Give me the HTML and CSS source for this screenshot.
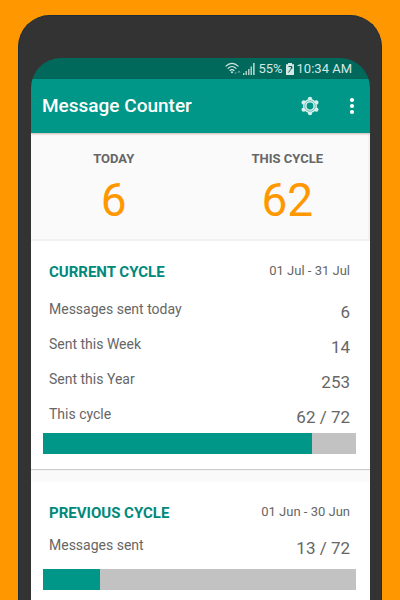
FILE: index.html
```html
<!DOCTYPE html>
<html lang="en">
<head>
<meta charset="utf-8">
<meta name="viewport" content="width=device-width, initial-scale=1">
<title>Message Counter</title>
<link rel="stylesheet" href="styles.css">
</head>
<body>
<div class="phone">
  <div class="screen">
    <div class="status">
      <svg class="wifi" width="16" height="14" viewBox="0 0 16 14" fill="none" stroke="currentColor" stroke-width="1.2" aria-hidden="true">
        <path d="M.6 4.400Q7 -1.600 13.400 4.400M2.700 6.700Q7 2.300 11.300 6.700M4.700 8.800Q7 6.600 9.300 8.800"/>
        <path d="M5.600 10L7 11.600 8.400 10 7 9.200z" fill="currentColor" stroke="none"/>
        <path d="M9.300 10.500h2.400L10.500 12.200zM12.300 10.500h3.400L14 8.500z" fill="currentColor" stroke="none" opacity=".5"/>
      </svg>
      <svg class="signal" width="12" height="12" viewBox="0 0 12 12" fill="currentColor" aria-hidden="true">
        <path d="M0 10h1.500v2H0zM2.500 8H4v4H2.500zM5 6h1.500v6H5zM7.500 3.500H9V12H7.500zM10 0h1.700v12H10z" opacity=".8"/>
      </svg>
      <span>55%</span>
      <svg class="battery" width="8" height="12" viewBox="0 0 8 12" aria-hidden="true">
        <path d="M2 0h4v1.200H8V12H0V1.200h2z" fill="currentColor"/>
        <path d="M2.500 3.500h3.300L4.800 6.300 2.500 9.500M5.800 3.500V6" fill="none" stroke="#00695c" stroke-width="1"/>
      </svg>
      <span>10:34 AM</span>
    </div>
    <header class="appbar">
      <h1>Message Counter</h1>
      <button class="icon-button" type="button" aria-label="Settings">
        <svg width="18" height="20" viewBox="-9 -10 18 20" aria-hidden="true">
          <g fill="#d8f0ed">
            <circle r="7"/>
            <circle cy="-7" r="2.200"/><circle cy="7" r="2.200"/>
            <circle cx="6.300" cy="-3.600" r="2.200"/><circle cx="6.300" cy="3.600" r="2.200"/>
            <circle cx="-6.300" cy="-3.600" r="2.200"/><circle cx="-6.300" cy="3.600" r="2.200"/>
          </g>
          <circle r="5.300" fill="none" stroke="#6fc3ba" stroke-width="1"/>
          <circle r="3.400" fill="#009688"/>
        </svg>
      </button>
      <button class="icon-button" type="button" aria-label="More options">
        <svg width="6" height="18" viewBox="0 0 6 18" fill="#fff" aria-hidden="true">
          <circle cx="3" cy="3" r="2.100"/><circle cx="3" cy="9" r="2.100"/><circle cx="3" cy="15" r="2.100"/>
        </svg>
      </button>
    </header>
    <main>
      <section class="summary">
        <div class="stat"><h2>TODAY</h2><p>6</p></div>
        <div class="stat"><h2>THIS CYCLE</h2><p>62</p></div>
      </section>
      <section class="card">
        <div class="card-head"><h2>CURRENT CYCLE</h2><span>01 Jul - 31 Jul</span></div>
        <dl class="rows">
          <div class="row"><dt>Messages sent today</dt><dd>6</dd></div>
          <div class="row"><dt>Sent this Week</dt><dd>14</dd></div>
          <div class="row"><dt>Sent this Year</dt><dd>253</dd></div>
          <div class="row"><dt>This cycle</dt><dd>62 / 72</dd></div>
        </dl>
        <div class="bar" role="progressbar" aria-label="This cycle" aria-valuemin="0" aria-valuemax="72" aria-valuenow="62"><div class="fill" style="width:86.1%"></div></div>
      </section>
      <section class="card card-compact">
        <div class="card-head"><h2>PREVIOUS CYCLE</h2><span>01 Jun - 30 Jun</span></div>
        <dl class="rows">
          <div class="row"><dt>Messages sent</dt><dd>13 / 72</dd></div>
        </dl>
        <div class="bar" role="progressbar" aria-label="Previous cycle" aria-valuemin="0" aria-valuemax="72" aria-valuenow="13"><div class="fill" style="width:18.1%"></div></div>
      </section>
    </main>
  </div>
</div>
</body>
</html>
```
FILE: styles.css
```css
* {
  box-sizing: border-box;
}

body,
h1,
h2,
p,
dl,
dd {
  margin: 0;
}

body {
  display: flex;
  min-height: 100vh;
  padding: 15px 18px 0;
  background: #ff9800;
  color: #666;
  font-family: Roboto, "Liberation Sans", sans-serif;
}

.phone {
  display: flex;
  flex: 1;
  padding: 42px 11px 0 12px;
  border: solid #1d2c3c;
  border-width: 1px 1px 0;
  border-radius: 32px 32px 0 0;
  background: #333;
}

.screen {
  display: flex;
  flex: 1;
  flex-direction: column;
  overflow: hidden;
  border-radius: 30px 30px 0 0;
}

main {
  flex: 1;
  background: #fafafa;
}

.status {
  display: flex;
  align-items: center;
  justify-content: flex-end;
  height: 21px;
  padding-right: 18px;
  background: #00695c;
  color: #d5e8e5;
  font-size: 13px;
  line-height: 21px;
}

.wifi {
  margin-right: 2px;
}

.signal,
.battery {
  margin-right: 3px;
}

.battery {
  margin-left: 3px;
}

.appbar {
  position: relative;
  display: flex;
  align-items: center;
  height: 54px;
  padding: 0 7px 0 11px;
  background: #009688;
  box-shadow: 0 1px 2px rgba(90, 20, 10, 0.3);
  color: #fff;
}

.appbar h1 {
  flex: 1;
  font-size: 19px;
  font-weight: 500;
  line-height: 24px;
}

.icon-button {
  display: grid;
  place-items: center;
  width: 22px;
  height: 32px;
  padding: 0;
  border: 0;
  background: none;
}

.icon-button + .icon-button {
  margin-left: 20px;
}

.summary {
  display: grid;
  grid-template-columns: 1fr 1fr;
  column-gap: 8px;
  height: 108px;
  padding-top: 17px;
  border-bottom: 2px solid #f1f1f1;
  box-shadow: inset -2px 0 #f1f1f1;
  text-align: center;
}

.stat h2 {
  font-size: 13px;
  font-weight: 700;
  line-height: 18px;
}

.stat p {
  color: #ff9800;
  font-size: 46px;
  line-height: 64px;
}

.card {
  padding: 20px 14px 15px 12px;
  background: #fff;
  box-shadow: 0 1px 1px #ccc;
}

.card + .card {
  margin-top: 13px;
}

.card-head,
.row {
  display: flex;
  justify-content: space-between;
  padding: 0 6px;
}

.card-head {
  height: 32px;
  font-size: 13px;
  line-height: 20px;
}

.card-head h2 {
  color: #00897b;
  font-size: 15px;
  font-weight: 700;
  line-height: 22px;
}

.row {
  height: 35px;
  padding-top: 6px;
}

.row dt {
  font-size: 14px;
  line-height: 20px;
}

.row dd {
  font-size: 17px;
  line-height: 26px;
}

.bar {
  height: 21px;
  background: #c2c2c2;
}

.fill {
  height: 100%;
  background: #009688;
}

.card-compact {
  padding-bottom: 10px;
}

.card-compact .card-head {
  height: 27px;
}

.card-compact .rows {
  padding-bottom: 5px;
}
```
